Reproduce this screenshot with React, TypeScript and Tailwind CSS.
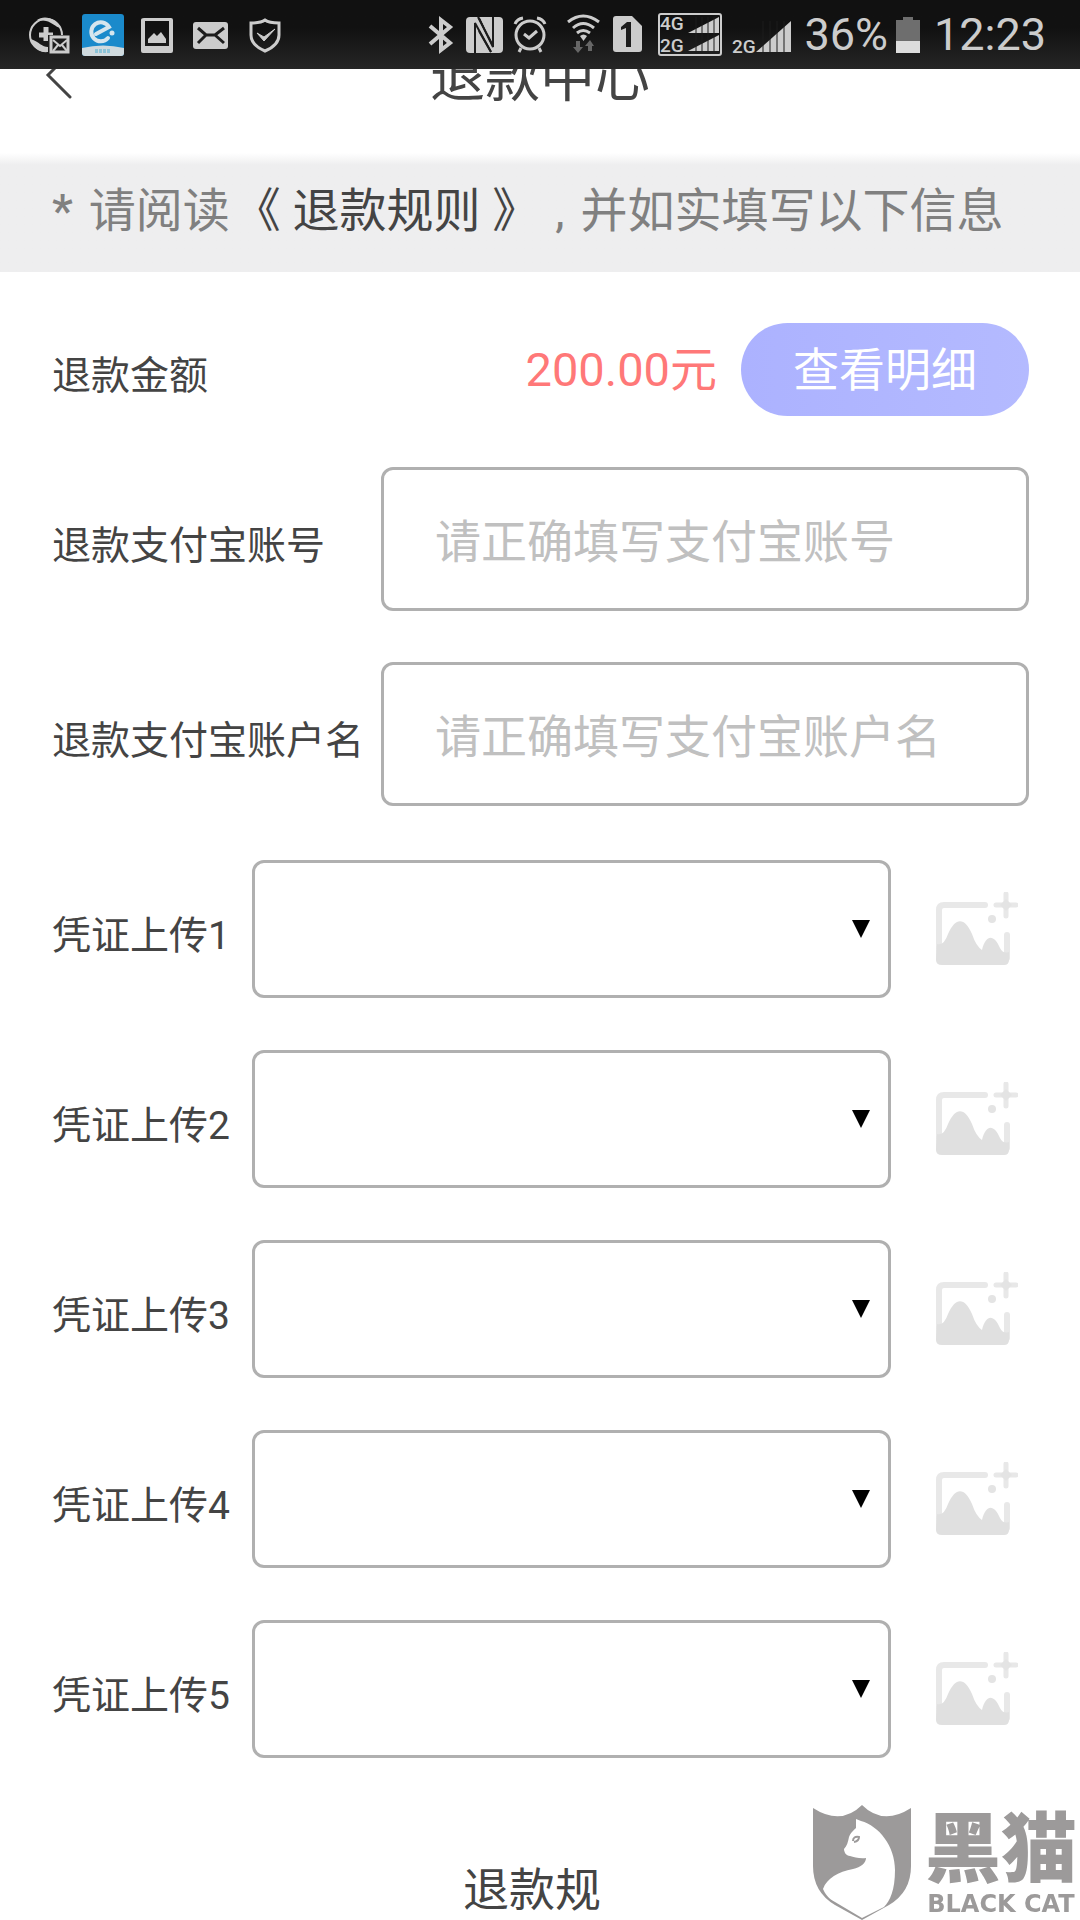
import React from 'react';

const vouchers = [1, 2, 3, 4, 5];

const accountFields = [
  { id: 'alipay-account', label: '退款支付宝账号', placeholder: '请正确填写支付宝账号' },
  { id: 'alipay-name', label: '退款支付宝账户名', placeholder: '请正确填写支付宝账户名' },
];

const StatusBar: React.FC = () => {
  return (
    <div className="relative z-10 flex h-[69px] items-center justify-between bg-gradient-to-b from-[#111111] from-40% to-[#262626] pl-7 pr-[34px] text-[#cccccc]">
      {/* Notifications */}
      <div className="flex items-center gap-[10px]">
        <svg className="size-11" viewBox="0 0 44 44" fill="none">
          <circle cx="18" cy="22" r="16" stroke="currentColor" strokeWidth="2" />
          <path d="M9 7C15 2 28 4 33 15C27 14 24 9 18 8C14 7 11 8 9 7ZM3 26C5 35 12 40 20 39V34C14 34 11 29 3 26Z" fill="currentColor" />
          <path d="M18 14V28M11 22H25" stroke="currentColor" strokeWidth="5" />
          <rect x="20" y="22" width="22" height="19" fill="#1c1c1c" />
          <rect x="23" y="24" width="17" height="15" stroke="currentColor" strokeWidth="3" />
          <path d="M25 27L32 33L39 27M25 38L30 32M39 38L34 32" stroke="currentColor" strokeWidth="2" />
        </svg>
        <svg className="size-11" viewBox="0 0 44 44" fill="none">
          <rect y="1" width="42" height="42" rx="3" fill="#1a8acb" />
          <path d="M0 35Q21 30 42 35V40Q42 43 39 43H3Q0 43 0 40Z" fill="#d0dade" />
          <path d="M14 21L27 14A9.500 9.500 0 1 0 26 25" stroke="#d6e6ee" strokeWidth="4" strokeLinecap="round" />
          <circle cx="30" cy="20" r="2.500" fill="#d6e6ee" />
          <path d="M13 38H29" stroke="#8cc4d8" strokeWidth="4" strokeDasharray="3 1" />
        </svg>
        <svg className="size-11" viewBox="0 0 44 44" fill="none">
          <path fillRule="evenodd" d="M8 5H35Q37 5 37 7V38Q37 40 35 40H7Q5 40 5 38V7Q5 5 8 5ZM9 8V33H33V8Z" fill="currentColor" />
          <path d="M12 30V26L18 20L21 23L25 19L30 26V30Z" fill="currentColor" />
        </svg>
        <svg className="size-11" viewBox="0 0 44 44" fill="none">
          <rect x="3" y="9" width="35" height="27" rx="3" fill="currentColor" />
          <path d="M8 15L16 22H25L34 15M8 30L16 22M34 30L25 22" stroke="#1c1c1c" strokeWidth="3" />
        </svg>
        <svg className="size-11" viewBox="0 0 44 44" fill="none">
          <path d="M21 7C17 10 12 10 7 10V22C7 30 14 35 21 38C28 35 35 30 35 22V10C30 10 25 10 21 7Z" stroke="currentColor" strokeWidth="3" />
          <path d="M13 20L20 24L31 16L20 28Z" fill="currentColor" stroke="currentColor" strokeWidth="1" />
        </svg>
      </div>

      {/* System state */}
      <div className="flex items-center gap-2">
        <svg className="h-11 w-[30px]" viewBox="0 0 30 44" fill="none">
          <path d="M4 13L24 30L15 37V7L24 14L4 31" stroke="currentColor" strokeWidth="4" />
        </svg>
        <svg className="h-11 w-10" viewBox="0 0 40 44" fill="none">
          <rect x="2" y="4" width="37" height="36" rx="4" fill="currentColor" />
          <path d="M11 40V10L27 39M29 4V34L15 5" stroke="#1c1c1c" strokeWidth="2" />
          <path d="M15 20V40H24ZM25 24V4H16Z" fill="currentColor" />
          <path d="M15 18L27 39M14 4L28 31" stroke="#1c1c1c" strokeWidth="2" />
        </svg>
        <svg className="h-11 w-9" viewBox="0 0 36 44" fill="none">
          <circle cx="18" cy="22" r="14" stroke="currentColor" strokeWidth="3" />
          <path d="M3 11Q5 6 11 5M33 11Q31 6 25 5M9 35L7 39M27 35L29 39M12 21L17 25L25 18" stroke="currentColor" strokeWidth="3" />
        </svg>
        <svg className="h-11 w-12" viewBox="0 0 48 44" fill="none">
          <path d="M12 9Q27 -3 43 9M17 15Q27 6 38 15M21 20Q27 15 34 20" stroke="currentColor" strokeWidth="3" />
          <path d="M24 23Q27.500 20 31 23L27.500 28Z" fill="currentColor" />
          <path d="M20 28V34H17L22 40L27 34H24V28ZM32 38V33H29L34 27L38 33H36V38Z" fill="#666666" />
        </svg>
        <svg className="h-11 w-8" viewBox="0 0 32 44">
          <path d="M4 3H20L30 13V36Q30 39 27 39H4Q1 39 1 36V6Q1 3 4 3Z" fill="currentColor" />
          <path d="M9 14L15 9H19V34H14V15L9 17Z" fill="#1c1c1c" />
        </svg>
        <svg className="h-11 w-[72px]" viewBox="0 0 72 44" fill="none">
          <rect x="7" y="1" width="62" height="41" rx="2" stroke="currentColor" strokeWidth="2" />
          <text x="8" y="17" fontSize="19" fontWeight="500" fontFamily="Roboto, sans-serif" fill="currentColor">4G</text>
          <text x="8" y="39" fontSize="19" fontWeight="500" fontFamily="Roboto, sans-serif" fill="currentColor">2G</text>
          <path d="M36 20L67 4V20ZM36 38L67 22V38Z" fill="currentColor" />
          <path d="M44 4V38M50 4V38M56 4V38M62 4V38" stroke="#1c1c1c" strokeWidth="1" />
        </svg>
        <svg className="h-11 w-16" viewBox="0 0 64 44">
          <text x="0" y="40" fontSize="19" fontWeight="500" fontFamily="Roboto, sans-serif" fill="currentColor">2G</text>
          <path d="M24 39L59 8V39Z" fill="currentColor" />
          <path d="M31 8V39M38 8V39M45 8V39M52 8V39" stroke="#1c1c1c" strokeWidth="1" />
        </svg>
        <span className="text-[45px] leading-none">36%</span>
        <svg className="h-11 w-[30px]" viewBox="0 0 30 44">
          <path d="M0 7H7V4H17V7H24V28H0Z" fill="#6e6e6e" />
          <path d="M0 28H24V40H0Z" fill="#dddddd" />
        </svg>
        <span className="text-[45px] leading-none">12:23</span>
      </div>
    </div>
  );
};

const AddImageIcon: React.FC = () => {
  return (
    <svg className="h-[74px] w-[82px]" viewBox="0 0 82 74" fill="none">
      <path d="M49 13H8Q3 13 3 18V66M71 43V66" stroke="#e8e8e8" strokeWidth="6" strokeLinecap="round" />
      <path d="M1 52Q8 54 12 42C20 24 29 26 36 42Q40 54 46 58C50 42 58 42 64 56Q67 62 73 60V68Q73 73 68 73H6Q0 73 0 68Z" fill="#e0e0e0" />
      <path d="M70 2V24M60 13H80" stroke="#e8e8e8" strokeWidth="5" strokeLinecap="round" />
      <path d="M70 7L76 13L70 19L64 13Z" fill="#e4e4e4" />
      <circle cx="56" cy="27" r="4" fill="#e4e4e4" />
    </svg>
  );
};

const Watermark: React.FC = () => {
  return (
    <div className="pointer-events-none fixed bottom-0 right-0 flex items-end gap-[14px] pr-[3px] text-[#9c9a9a]">
      <svg className="h-[116px] w-[98px]" viewBox="0 0 98 116">
        <path d="M0 4Q28 22 49 1Q70 22 98 4V62Q98 88 76 101L49 116L22 101Q0 88 0 62Z" fill="currentColor" />
        <path d="M43 15L48 17C66 22 82 42 82 66C82 86 77 97 71 103L49 114L22 98C16 95 12 90 10 85C14 74 25 68 40 65C48 63 53 59 53 54C47 55 41 53 37 52C33 52 31 48 31 45C34 42 35 38 36 33C38 28 41 26 43 24Z" fill="#ffffff" />
        <path d="M40 37Q40 32 46 33Q46 37 41 38" fill="none" stroke="currentColor" strokeWidth="2" />
      </svg>
      <div className="flex flex-col items-center">
        <span className="text-[76px] font-black leading-[76px]">黑猫</span>
        <span className="font-['DejaVu_Sans'] text-[24px] font-bold leading-8">BLACK CAT</span>
      </div>
    </div>
  );
};

export default function App() {
  return (
    <div className="min-h-screen bg-white font-[Roboto,'Noto_Sans_CJK_SC',sans-serif] text-[#444444]">
      <StatusBar />

      {/* The title bar is scrolled part way under the status bar */}
      <header className="-mt-[68px] grid h-[152px] grid-cols-[1fr_auto_1fr] items-center px-11">
        <button type="button" aria-label="返回" className="justify-self-start">
          <svg className="h-12 w-8" viewBox="0 0 32 48" fill="none">
            <path d="M26 0L4 22L26 44" stroke="currentColor" strokeWidth="3" strokeLinecap="round" />
          </svg>
        </button>
        <h1 className="text-[55px] leading-none">退款中心</h1>
      </header>

      <p className="flex h-[119px] items-center whitespace-pre bg-gradient-to-b from-white to-[#eeeeef] to-10% px-[52px] pb-1 text-[47px] leading-none text-[#808080]">
        <span className="mr-4 font-medium">*</span>
        <span>请阅读</span>
        <a href="#rules" className="ml-1 text-[#444444]">《 退款规则 》</a>
        <span className="ml-4 mr-4">,</span>
        <span>并如实填写以下信息</span>
      </p>

      <form className="pl-[52px] pr-[51px] pt-[51px]">
        <div className="flex items-center">
          <span className="flex-1 pt-[14px] text-[39px] leading-none">退款金额</span>
          <span className="text-[47px] leading-none text-[#ff7878]">200.00元</span>
          <button type="button" className="ml-6 h-[93px] w-[288px] rounded-full bg-gradient-to-r from-[#acb2ff] to-[#b4baff] text-[46px] leading-none text-white">
            查看明细
          </button>
        </div>

        <div className="mt-[51px] flex flex-col gap-[51px]">
          {accountFields.map((field) => (
            <div key={field.id} className="flex items-center">
              <label htmlFor={field.id} className="w-[329px] shrink-0 whitespace-nowrap pt-[14px] text-[39px] leading-none">
                {field.label}
              </label>
              <input
                id={field.id}
                type="text"
                placeholder={field.placeholder}
                className="h-36 min-w-0 flex-1 rounded-xl border-3 border-[#b0b0b0] px-[51px] pt-[6px] text-[46px] placeholder:text-[#c0c0c0]"
              />
            </div>
          ))}
        </div>

        <div className="mt-[54px] flex flex-col gap-[52px]">
          {vouchers.map((n) => (
            <div key={n} className="flex items-center">
              <label htmlFor={`voucher-${n}`} className="w-[200px] shrink-0 whitespace-nowrap pt-[14px] text-[39px] leading-none">
                凭证上传{n}
              </label>
              <div className="relative min-w-0 flex-1">
                <select id={`voucher-${n}`} className="block h-[138px] w-full appearance-none rounded-xl border-3 border-[#b0b0b0] bg-white" />
                <svg className="pointer-events-none absolute right-5 top-[60px] h-[18px] w-5" viewBox="0 0 20 18">
                  <path d="M1 0H19L10 18Z" fill="#000000" />
                </svg>
              </div>
              <button type="button" aria-label={`添加凭证图片${n}`} className="ml-[45px] mr-[11px]">
                <AddImageIcon />
              </button>
            </div>
          ))}
        </div>
      </form>

      <h2 id="rules" className="mt-[102px] pr-4 text-center text-[46px] leading-[60px]">退款规</h2>

      <Watermark />
    </div>
  );
}
